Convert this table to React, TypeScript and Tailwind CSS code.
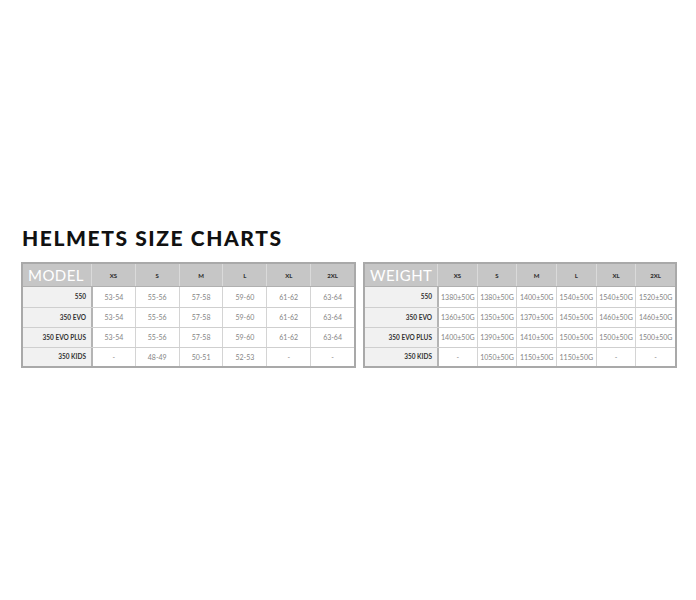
import React from "react";

const sizes = ["XS", "S", "M", "L", "XL", "2XL"];

const sizeRows = [
  { model: "550", values: ["53-54", "55-56", "57-58", "59-60", "61-62", "63-64"] },
  { model: "350 EVO", values: ["53-54", "55-56", "57-58", "59-60", "61-62", "63-64"] },
  { model: "350 EVO PLUS", values: ["53-54", "55-56", "57-58", "59-60", "61-62", "63-64"] },
  { model: "350 KIDS", values: ["-", "48-49", "50-51", "52-53", "-", "-"] },
];

const weightRows = [
  { model: "550", values: ["1380±50G", "1380±50G", "1400±50G", "1540±50G", "1540±50G", "1520±50G"] },
  { model: "350 EVO", values: ["1360±50G", "1350±50G", "1370±50G", "1450±50G", "1460±50G", "1460±50G"] },
  { model: "350 EVO PLUS", values: ["1400±50G", "1390±50G", "1410±50G", "1500±50G", "1500±50G", "1500±50G"] },
  { model: "350 KIDS", values: ["-", "1050±50G", "1150±50G", "1150±50G", "-", "-"] },
];

type Row = { model: string; values: string[] };

const Chart = ({
  title,
  rows,
  gridCols,
  width,
}: {
  title: string;
  rows: Row[];
  gridCols: string;
  width: string;
}) => {
  return (
    <div className={`${width} border-2 border-[#a9a9a9] bg-white`}>
      <div className={`grid ${gridCols} h-[23px] bg-[#c6c6c6] border-b border-[#b0b0b0]`}>
        <div className="flex items-center pl-[5px] text-[15px] leading-none text-white font-['Lato',sans-serif] tracking-[0.03em]">
          {title}
        </div>
        {sizes.map((s) => (
          <div
            key={s}
            className="flex items-center justify-center border-l border-[#dadada] text-[6px] font-black text-[#333] font-['Lato',sans-serif]"
          >
            {s}
          </div>
        ))}
      </div>
      {rows.map((r, i) => (
        <div
          key={r.model}
          className={`grid ${gridCols} ${i === 0 ? "" : "border-t border-[#cfcfcf]"} ${i === rows.length - 1 ? "h-[19px]" : "h-[20px]"}`}
        >
          <div className="flex items-center justify-end pr-[5px] bg-[#f1f1f1] text-[6.5px] font-bold text-[#333] font-['Lato',sans-serif]">
            {r.model}
          </div>
          {r.values.map((v, j) => (
            <div
              key={j}
              className={`flex items-center justify-center text-[7px] text-[#858585] font-['Lato',sans-serif] ${j === 0 ? "border-l-2 border-[#b4b4b4]" : "border-l border-[#d4d4d4]"}`}
            >
              {v}
            </div>
          ))}
        </div>
      ))}
    </div>
  );
};

export default function App() {
  return (
    <div className="w-[696px] h-[600px] bg-white pt-[227px] pl-[21px]">
      <h1 className="pl-[1px] text-[21px] leading-[22px] font-black tracking-[0.075em] text-[#111] font-['Lato',sans-serif]">
        HELMETS SIZE CHARTS
      </h1>
      <div className="flex gap-[7px] mt-[13px]">
        <Chart
          title="MODEL"
          rows={sizeRows}
          gridCols="grid-cols-[68px_repeat(6,1fr)]"
          width="w-[335px]"
        />
        <Chart
          title="WEIGHT"
          rows={weightRows}
          gridCols="grid-cols-[72px_repeat(6,1fr)]"
          width="w-[314px]"
        />
      </div>
    </div>
  );
}
